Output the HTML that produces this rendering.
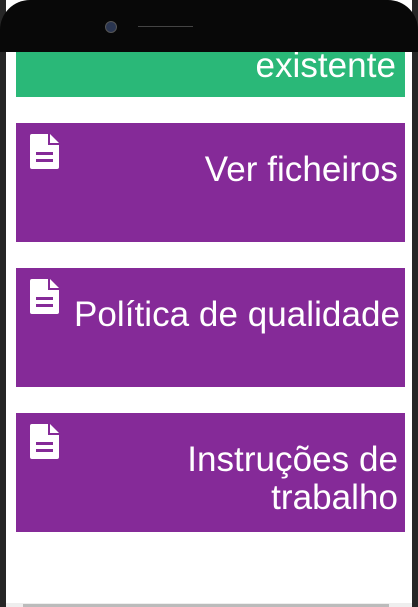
<!DOCTYPE html>
<html><head><meta charset="utf-8"><style>
html,body{margin:0;padding:0;width:418px;height:607px;overflow:hidden;background:#222;}
body{position:relative;font-family:"Liberation Sans",sans-serif;}
.screen{position:absolute;left:6px;top:0;width:406px;height:607px;background:#fff;}
.top{position:absolute;left:0;top:0;width:418px;height:52px;background:#080808;border-radius:30px 30px 0 0;}
.frame{position:absolute;top:0;width:6px;height:607px;background:#262626;}
.cam{position:absolute;left:105px;top:21px;width:10px;height:10px;border-radius:50%;background:#2a3550;border:1px solid #555;}
.spk{position:absolute;left:138px;top:26px;width:55px;height:1px;background:#444;}
.box{position:absolute;left:16px;width:389px;color:#fff;text-align:right;font-size:35px;line-height:38px;font-weight:300;letter-spacing:0.05px;}
.p{background:#852a98;height:119px;}
.p .t{position:absolute;right:7px;top:28px;width:340px;}
.g{background:#2ab878;top:52px;height:45px;}
.g .t{position:absolute;right:9px;top:-5px;}
.ic{position:absolute;left:14px;top:11px;}
.sb{position:absolute;left:6px;top:603px;width:406px;height:4px;background:#eee;}
.th{position:absolute;left:23px;top:604px;width:366px;height:3px;background:#bbb;}
</style></head><body>
<div class="screen"></div>
<div class="frame" style="left:0"></div><div class="frame" style="left:412px"></div>
<div class="box g"><div class="t">existente</div></div>
<div class="box p" style="top:123px"><svg class="ic" width="30" height="35" viewBox="0 0 30 35"><path d="M0 2 Q0 0 2 0 H18 V11 H29 V33 Q29 35 27 35 H2 Q0 35 0 33Z M20 0 L29 9 H20Z" fill="#fff"/><rect x="6" y="18" width="17" height="3" fill="#852a98"/><rect x="6" y="25" width="17" height="3" fill="#852a98"/></svg><div class="t">Ver ficheiros</div></div>
<div class="box p" style="top:268px"><svg class="ic" width="30" height="35" viewBox="0 0 30 35"><path d="M0 2 Q0 0 2 0 H18 V11 H29 V33 Q29 35 27 35 H2 Q0 35 0 33Z M20 0 L29 9 H20Z" fill="#fff"/><rect x="6" y="18" width="17" height="3" fill="#852a98"/><rect x="6" y="25" width="17" height="3" fill="#852a98"/></svg><div class="t" style="width:385px;right:5px;white-space:nowrap">Política de qualidade</div></div>
<div class="box p" style="top:413px"><svg class="ic" width="30" height="35" viewBox="0 0 30 35"><path d="M0 2 Q0 0 2 0 H18 V11 H29 V33 Q29 35 27 35 H2 Q0 35 0 33Z M20 0 L29 9 H20Z" fill="#fff"/><rect x="6" y="18" width="17" height="3" fill="#852a98"/><rect x="6" y="25" width="17" height="3" fill="#852a98"/></svg><div class="t">Instruções de<br>trabalho</div></div>
<div class="top"><div class="cam"></div><div class="spk"></div></div>
<div class="sb"></div><div class="th"></div>
</body></html>
